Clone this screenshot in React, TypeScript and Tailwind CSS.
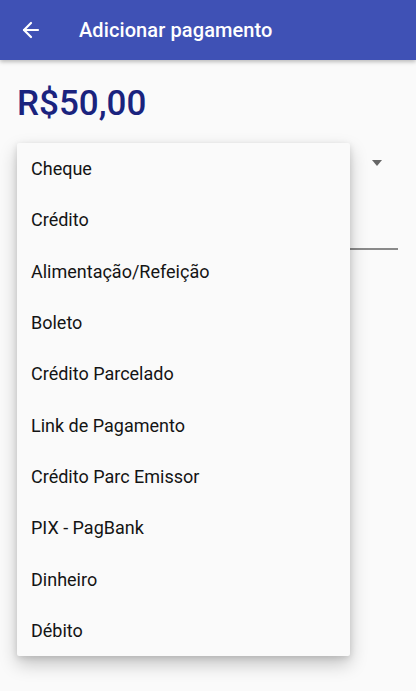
import { ArrowLeft } from 'lucide-react';

const options = [
  'Cheque',
  'Crédito',
  'Alimentação/Refeição',
  'Boleto',
  'Crédito Parcelado',
  'Link de Pagamento',
  'Crédito Parc Emissor',
  'PIX - PagBank',
  'Dinheiro',
  'Débito',
];

export default function App() {
  return (
    <div className="w-[416px] h-[691px] bg-[#fafafa] flex flex-col overflow-hidden font-['Roboto',sans-serif]">
      {/* Toolbar */}
      <header className="h-[60px] bg-[#3f51b5] flex items-center shrink-0 shadow-[0_2px_4px_rgba(0,0,0,0.25)] z-10">
        <ArrowLeft className="w-[24px] h-[24px] text-white ml-[19px]" strokeWidth={2.2} />
        <h1 className="ml-[36px] text-white text-[20px] font-medium tracking-[0.1px]">Adicionar pagamento</h1>
      </header>

      {/* Content */}
      <div className="relative flex-1">
        <p className="mt-[22px] ml-[17px] text-[#1a237e] text-[35px] font-medium leading-[44px]">R$50,00</p>

        {/* spinner behind the popup */}
        <div className="ml-[17px] mr-[18px] mt-[17px] h-[40px] flex items-center justify-end pr-[16px]">
          <div className="w-0 h-0 border-l-[5.5px] border-r-[5.5px] border-t-[6px] border-l-transparent border-r-transparent border-t-[#666]" />
        </div>
        <div className="ml-[17px] mr-[18px] mt-[65px] h-[1.5px] bg-[#8a8a8a]" />

        {/* Popup menu */}
        <ul className="absolute left-[17px] top-[83px] w-[333px] bg-[#fafafa] rounded-[2px] shadow-[0_8px_18px_rgba(0,0,0,0.22),0_2px_6px_rgba(0,0,0,0.12)]">
          {options.map((o) => (
            <li key={o} className="h-[51.3px] flex items-center pl-[14px] text-[18px] text-[#141414]">
              {o}
            </li>
          ))}
        </ul>
      </div>
    </div>
  );
}
